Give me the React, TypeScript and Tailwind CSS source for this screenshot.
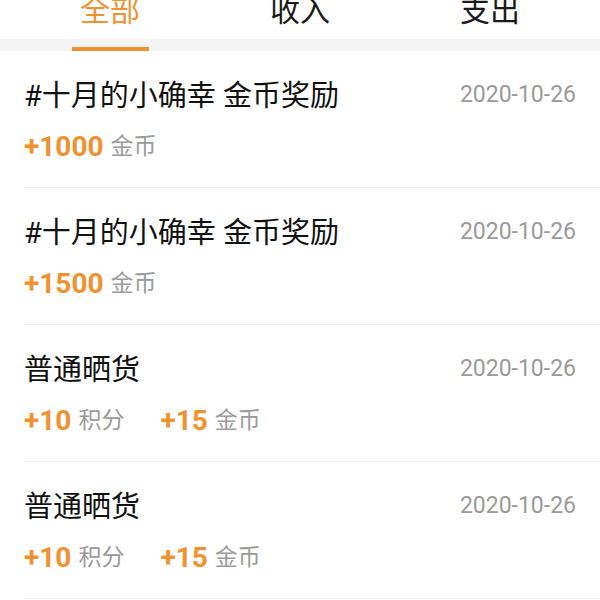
import React from "react";

type Amt = { value: string; unit: string };
type Item = { title: string; date: string; amounts: Amt[] };

const items: Item[] = [
  { title: "#十月的小确幸 金币奖励", date: "2020-10-26", amounts: [{ value: "+1000", unit: "金币" }] },
  { title: "#十月的小确幸 金币奖励", date: "2020-10-26", amounts: [{ value: "+1500", unit: "金币" }] },
  { title: "普通晒货", date: "2020-10-26", amounts: [{ value: "+10", unit: "积分" }, { value: "+15", unit: "金币" }] },
  { title: "普通晒货", date: "2020-10-26", amounts: [{ value: "+10", unit: "积分" }, { value: "+15", unit: "金币" }] },
];

const tabs = ["全部", "收入", "支出"];

export default function App() {
  return (
    <div
      className="w-[600px] h-[600px] overflow-hidden bg-white"
      style={{ fontFamily: 'Roboto, "Noto Sans CJK SC", sans-serif' }}
    >
      <div className="grid grid-cols-3 px-[15px] h-[39px]">
        {tabs.map((t, i) => (
          <div key={t} className="flex justify-center">
            <span
              className={`-mt-[4px] text-[30px] leading-[30px] ${i === 0 ? "text-[#ef922f]" : "text-[#1b1b1b]"}`}
            >
              {t}
            </span>
          </div>
        ))}
      </div>
      <div className="grid grid-cols-3 px-[15px] h-[12px] bg-[#f4f4f4]">
        <div className="flex justify-center">
          <div className="mt-[8px] h-[4px] w-[77px] bg-[#ef922f]" />
        </div>
      </div>
      <div>
        {items.map((it, idx) => (
          <div key={idx} className="ml-[24px] pr-[24px] h-[137px] border-b border-[#eeeeee] pt-[27px]">
            <div className="flex justify-between items-center h-[36px]">
              <span className="text-[29px] leading-[36px] text-[#111111]">{it.title}</span>
              <span className="text-[23px] leading-[36px] text-[#9a9a9a] -mt-[3px]">{it.date}</span>
            </div>
            <div className="mt-[15px] flex items-center h-[36px] gap-[36px]">
              {it.amounts.map((a, j) => (
                <div key={j} className="flex items-center gap-[7px]">
                  <span className="text-[28px] leading-[36px] font-bold text-[#ef922f]">{a.value}</span>
                  <span className="text-[23px] leading-[36px] text-[#9a9a9a]">{a.unit}</span>
                </div>
              ))}
            </div>
          </div>
        ))}
      </div>
    </div>
  );
}
